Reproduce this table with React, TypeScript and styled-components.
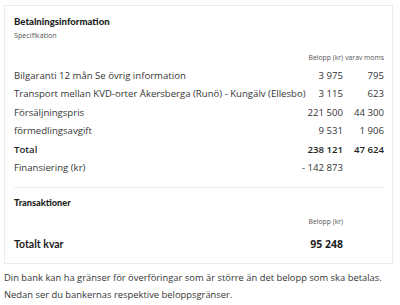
import React from "react";
import styled, { createGlobalStyle } from "styled-components";

const Global = createGlobalStyle`
  html, body { margin: 0; padding: 0; background: #fff; }
  body { font-family: "Open Sans", "Noto Sans", sans-serif; color: #363636; }
`;

const Page = styled.div`
  padding: 5px 7px 0 4px;
`;

const Card = styled.section`
  border: 1px solid #ececec;
  padding: 9px 8px 12px 9px;
`;

const Title = styled.h2<{ $size?: number }>`
  margin: 0;
  font-family: "Lato", "Noto Sans", sans-serif;
  font-weight: 900;
  font-size: ${(p) => p.$size ?? 9.6}px;
  line-height: 14px;
  color: #1e1e1e;
`;

const Sub = styled.div`
  font-size: 7.2px;
  line-height: 12px;
  color: #555;
`;

const Grid = styled.div`
  display: grid;
  grid-template-columns: minmax(0, 1fr) 60px 41px;
  align-items: center;
`;

const Head = styled.div<{ $h?: number }>`
  font-size: 6.8px;
  color: #555;
  text-align: right;
  white-space: nowrap;
  height: ${(p) => p.$h ?? 14}px;
  line-height: 14px;
`;

const Cell = styled.div<{ $bold?: boolean; $num?: boolean }>`
  font-size: 9.6px;
  line-height: 18.4px;
  white-space: nowrap;
  font-weight: ${(p) => (p.$bold ? 600 : 400)};
  color: ${(p) => (p.$bold ? "#222" : "#363636")};
  text-align: ${(p) => (p.$num ? "right" : "left")};
`;

const Divider = styled.hr`
  border: 0;
  border-top: 1px solid #ececec;
  margin: 10px 0 0 0;
`;

const Section = styled.div`
  padding-top: 8px;
`;

const TotalLabel = styled.div`
  font-family: "Lato", "Noto Sans", sans-serif;
  font-weight: 700;
  font-size: 10.5px;
  color: #1e1e1e;
`;

const TotalValue = styled.div`
  font-size: 10.5px;
  font-weight: 700;
  color: #1e1e1e;
  text-align: right;
  white-space: nowrap;
`;

const Note = styled.p`
  margin: 5px 0 0 0;
  font-size: 9.4px;
  line-height: 17px;
  color: #363636;
  white-space: nowrap;
`;

const Spacer = styled.div<{ $h: number }>`
  height: ${(p) => p.$h}px;
`;

type Row = { label: string; amount: string; vat?: string; bold?: boolean };

const rows: Row[] = [
  { label: "Bilgaranti 12 mån Se övrig information", amount: "3 975", vat: "795" },
  { label: "Transport mellan KVD-orter Åkersberga (Runö) - Kungälv (Ellesbo)", amount: "3 115", vat: "623" },
  { label: "Försäljningspris", amount: "221 500", vat: "44 300" },
  { label: "förmedlingsavgift", amount: "9 531", vat: "1 906" },
  { label: "Total", amount: "238 121", vat: "47 624", bold: true },
  { label: "Finansiering (kr)", amount: "- 142 873" },
];

export default function App() {
  return (
    <Page>
      <Global />
      <Card>
        <Title>Betalningsinformation</Title>
        <Sub>Specifikation</Sub>
        <Spacer $h={10} />
        <Grid>
          <div />
          <Head $h={16}>Belopp (kr)</Head>
          <Head $h={16}>varav moms</Head>
          {rows.map((r) => (
            <React.Fragment key={r.label}>
              <Cell $bold={r.bold}>{r.label}</Cell>
              <Cell $bold={r.bold} $num>{r.amount}</Cell>
              <Cell $bold={r.bold} $num>{r.vat ?? ""}</Cell>
            </React.Fragment>
          ))}
        </Grid>
        <Divider />
        <Section>
          <Title $size={9.2}>Transaktioner</Title>
          <Spacer $h={5} />
          <Grid>
            <div />
            <Head>Belopp (kr)</Head>
            <div />
          </Grid>
          <Spacer $h={8} />
          <Grid>
            <TotalLabel>Totalt kvar</TotalLabel>
            <TotalValue>95 248</TotalValue>
            <div />
          </Grid>
        </Section>
      </Card>
      <Note>
        Din bank kan ha gränser för överföringar som är större än det belopp som ska betalas.
        <br />
        Nedan ser du bankernas respektive beloppsgränser.
      </Note>
    </Page>
  );
}
